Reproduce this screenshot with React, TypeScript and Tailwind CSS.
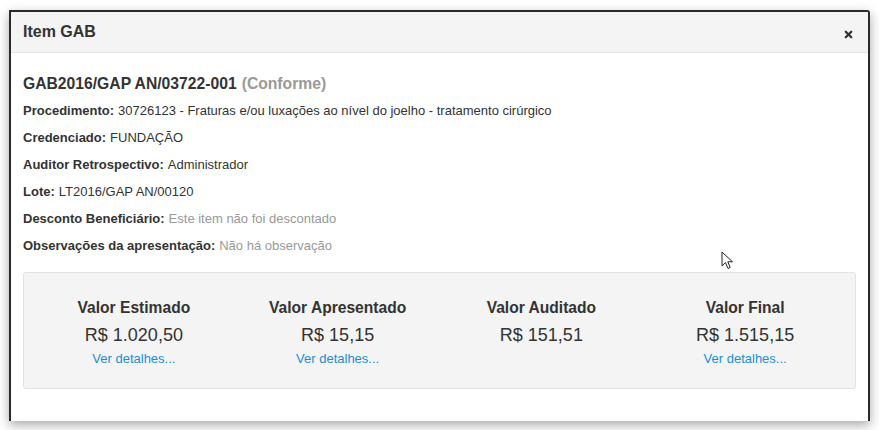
import { X } from 'lucide-react';

const font = { fontFamily: '"Liberation Sans", Arial, sans-serif' };

const rows: { label: string; value: string; muted?: boolean }[] = [
  { label: 'Procedimento:', value: '30726123 - Fraturas e/ou luxações ao nível do joelho - tratamento cirúrgico' },
  { label: 'Credenciado:', value: 'FUNDAÇÃO' },
  { label: 'Auditor Retrospectivo:', value: 'Administrador' },
  { label: 'Lote:', value: 'LT2016/GAP AN/00120' },
  { label: 'Desconto Beneficiário:', value: 'Este item não foi descontado', muted: true },
  { label: 'Observações da apresentação:', value: 'Não há observação', muted: true },
];

const valores = [
  { title: 'Valor Estimado', value: 'R$ 1.020,50', link: true },
  { title: 'Valor Apresentado', value: 'R$ 15,15', link: true },
  { title: 'Valor Auditado', value: 'R$ 151,51', link: false },
  { title: 'Valor Final', value: 'R$ 1.515,15', link: true },
];

export default function App() {
  return (
    <div className="relative w-[879px] h-[430px] bg-white overflow-hidden" style={font}>
      <div className="pt-[10px] pl-[9px]">
        <div className="w-[861px] h-[411px] bg-white border-t-2 border-l-2 border-r-2 border-[#2a2a2a] rounded-tr-[3px] shadow-[0_4px_12px_rgba(0,0,0,0.35)] flex flex-col">
          {/* Header */}
          <div className="h-[41px] bg-[#f4f4f4] border-b border-[#e5e5e5] flex items-center justify-between pl-3 pr-[14px]">
            <h4 className="text-[16px] font-bold text-[#333]">Item GAB</h4>
            <X className="w-[11px] h-[11px] text-[#333] mt-[5px]" strokeWidth={5} />
          </div>

          {/* Body */}
          <div className="px-3 pt-[17px] text-[#333]">
            <div className="h-[27px] flex items-center text-[15.7px] font-bold">
              GAB2016/GAP AN/03722-001
              <span className="text-[#999] ml-[5px]">(Conforme)</span>
            </div>
            {rows.map((r) => (
              <div key={r.label} className="h-[27px] flex items-center text-[13px]">
                <span className="font-bold">{r.label}</span>
                <span className={`ml-[4px] ${r.muted ? 'text-[#999]' : ''}`}>{r.value}</span>
              </div>
            ))}

            {/* Valores */}
            <div className="mt-[13px] h-[117px] bg-[#f4f4f4] border border-[#e3e3e3] rounded-[3px] px-2 pt-[25px] grid grid-cols-4">
              {valores.map((v) => (
                <div key={v.title} className="flex flex-col items-center">
                  <div className="h-[20px] flex items-center text-[15.6px] font-bold">{v.title}</div>
                  <div className="h-[24px] mt-[5px] flex items-center text-[18px]">{v.value}</div>
                  {v.link && (
                    <a className="h-[16px] mt-[4px] flex items-center text-[13px] text-[#1a8fd6] cursor-pointer">
                      Ver detalhes...
                    </a>
                  )}
                </div>
              ))}
            </div>
          </div>
        </div>
      </div>

      {/* mouse pointer */}
      <svg className="absolute left-[721px] top-[251px]" width="14" height="20" viewBox="0 0 14 20">
        <path d="M1 1 L1 15 L4.5 11.5 L7 17.5 L9.2 16.5 L6.8 10.8 L11.5 10.8 Z" fill="white" stroke="#222" strokeWidth="1" strokeLinejoin="round" />
      </svg>
    </div>
  );
}
